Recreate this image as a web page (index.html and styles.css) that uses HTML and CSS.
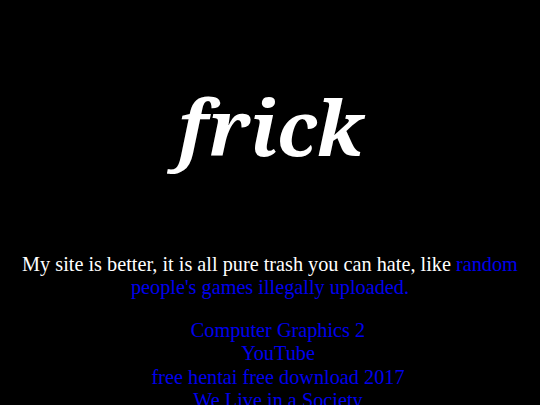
FILE: index.html
```html
<!DOCTYPE html>
<html lang="en">
<head>
    <meta charset="UTF-8">
    <title>frick</title>
    <link rel="stylesheet" href="styles.css">
</head>
<body>
    <h1 class="title">frick</h1>
    <p class="intro">My site is better, it is all pure trash you can hate, like <a href="#">random people's games illegally uploaded.</a></p>
    <div class="links">
        <a href="#">Computer Graphics 2</a>
        <a href="#">YouTube</a>
        <a href="#">free hentai free download 2017</a>
        <a href="#">We Live in a Society</a>
    </div>
</body>
</html>
```

FILE: styles.css
```css
body {
    background-color: #000;
    color: #fff;
    font-family: 'Liberation Serif', 'Times New Roman', serif;
    font-size: 20.25px;
    text-align: center;
    margin: 8px;
}

a {
    color: #0000ee;
    text-decoration: none;
}

.title {
    font-family: 'Noto Serif', 'DejaVu Serif', serif;
    font-style: italic;
    font-weight: bold;
    font-size: 76px;
    line-height: 76px;
    margin: 81px 0 88px;
}

.intro {
    margin: 0 0 20px;
    line-height: 23px;
}

.links {
    display: flex;
    flex-direction: column;
    align-items: center;
    padding-left: 16px;
    line-height: 23.4px;
}
```
